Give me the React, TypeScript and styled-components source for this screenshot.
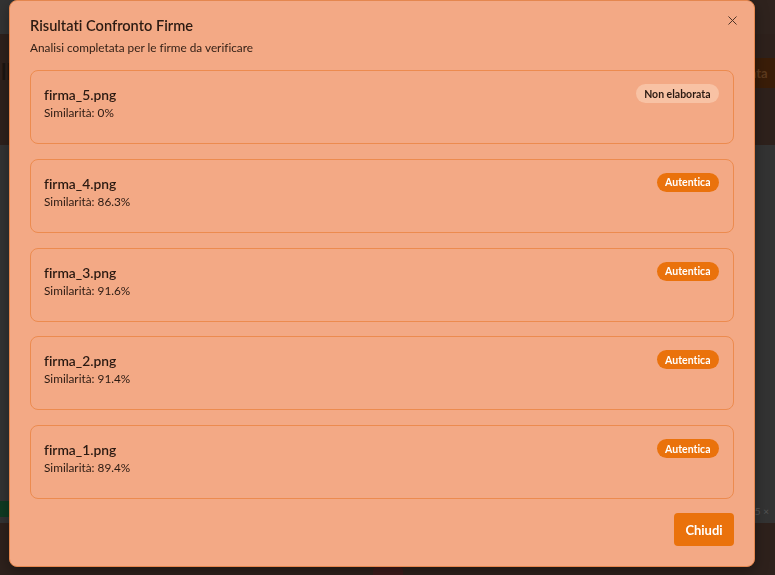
import React from "react";
import styled, { createGlobalStyle } from "styled-components";
import { X } from "lucide-react";

const GlobalStyle = createGlobalStyle`
  html, body { margin: 0; padding: 0; }
  body {
    background: #323232;
    font-family: Lato, "Noto Sans", Arial, sans-serif;
    font-variant-ligatures: none;
    overflow: hidden;
  }
  * { box-sizing: border-box; }
`;

const Page = styled.div`
  width: 775px;
  height: 575px;
  display: flex;
  flex-direction: column;
  background: #333333;
`;

const TopStrip = styled.div`
  height: 34px;
  background: linear-gradient(to right, #333333 0 700px, #2f231e 700px);
`;

const AppHeader = styled.div`
  height: 111px;
  background: #2e211c;
  display: flex;
  align-items: flex-start;
  justify-content: space-between;
  padding: 24px 0 0 0;
`;

const HeaderTitle = styled.div`
  font-size: 22px;
  font-weight: 700;
  color: #1b1511;
  padding-left: 1px;
`;

const HeaderButton = styled.div`
  width: 80px;
  height: 30px;
  background: #3a1d08;
  color: #5d3a1e;
  font-weight: 700;
  font-size: 13px;
  display: flex;
  align-items: center;
  padding-left: 14px;
  overflow: hidden;
`;

const MainArea = styled.div`
  flex: 1;
  display: flex;
  flex-direction: column;
  justify-content: flex-end;
`;

const StatusRow = styled.div`
  display: flex;
  justify-content: space-between;
  align-items: flex-end;
  padding: 0 0 6px 0;
`;

const GreenTag = styled.div`
  width: 9px;
  height: 16px;
  background: #0f3b22;
`;

const SmallNote = styled.div`
  font-size: 10px;
  color: #555;
  padding-right: 6px;
`;

const FooterBand = styled.div`
  height: 52px;
  background: #2e211c;
  display: flex;
  justify-content: center;
  align-items: flex-end;
`;

const RedMark = styled.div`
  width: 30px;
  height: 10px;
  background: #3d1b1b;
  border-radius: 6px 6px 0 0;
`;

const Modal = styled.div`
  position: fixed;
  left: 9px;
  top: 0;
  width: 746px;
  height: 567px;
  background: #f3a985;
  border: 1px solid #e4874f;
  border-radius: 8px;
  padding: 15px 20px 20px 20px;
  display: flex;
  flex-direction: column;
  color: #2b1a12;
  box-shadow: 0 4px 14px rgba(0, 0, 0, 0.35);
`;

const CloseButton = styled.button`
  position: absolute;
  right: 14px;
  top: 11px;
  width: 16px;
  height: 16px;
  padding: 0;
  border: none;
  background: transparent;
  color: #4e3427;
  display: flex;
  align-items: center;
  justify-content: center;
  cursor: pointer;
`;

const Title = styled.h2`
  margin: 0;
  font-size: 14.6px;
  line-height: 20px;
  font-weight: 600;
  color: #2b1a12;
`;

const Subtitle = styled.p`
  margin: 4px 0 0 0;
  font-size: 11.8px;
  line-height: 16px;
  color: #2f1d14;
`;

const CardList = styled.div`
  margin-top: 14px;
  display: flex;
  flex-direction: column;
  gap: 14.75px;
`;

const Card = styled.div`
  height: 74px;
  border: 1px solid #ec8b4f;
  border-radius: 8px;
  padding: 14px 14px 0 13px;
  display: flex;
  justify-content: space-between;
  align-items: flex-start;
`;

const CardInfo = styled.div`
  display: flex;
  flex-direction: column;
`;

const FileName = styled.div`
  font-size: 13.8px;
  line-height: 20px;
  font-weight: 600;
  color: #2b1a12;
`;

const Similarity = styled.div`
  font-size: 11.8px;
  line-height: 16px;
  color: #2b1a12;
`;

const Badge = styled.span<{ $variant: "ok" | "pending" }>`
  height: 19px;
  padding: 0 8.5px;
  border-radius: 999px;
  display: inline-flex;
  align-items: center;
  font-size: 10.5px;
  font-weight: 700;
  background: ${(p) => (p.$variant === "ok" ? "#ea720c" : "#f8c2a4")};
  color: ${(p) => (p.$variant === "ok" ? "#ffffff" : "#2b1a12")};
  margin-top: -1px;
`;

const Footer = styled.div`
  margin-top: auto;
  display: flex;
  justify-content: flex-end;
`;

const PrimaryButton = styled.button`
  width: 60px;
  height: 33px;
  border: none;
  border-radius: 4px;
  background: #ea720c;
  color: #ffffff;
  font-family: inherit;
  font-size: 13px;
  font-weight: 700;
  cursor: pointer;
`;

type Result = { name: string; similarity: string; status: "ok" | "pending" };

const results: Result[] = [
  { name: "firma_5.png", similarity: "0%", status: "pending" },
  { name: "firma_4.png", similarity: "86.3%", status: "ok" },
  { name: "firma_3.png", similarity: "91.6%", status: "ok" },
  { name: "firma_2.png", similarity: "91.4%", status: "ok" },
  { name: "firma_1.png", similarity: "89.4%", status: "ok" },
];

export default function App() {
  return (
    <>
      <GlobalStyle />
      <Page>
        <TopStrip />
        <AppHeader>
          <HeaderTitle>ll</HeaderTitle>
          <HeaderButton>Confronta</HeaderButton>
        </AppHeader>
        <MainArea>
          <StatusRow>
            <GreenTag />
            <SmallNote>5 ×</SmallNote>
          </StatusRow>
          <FooterBand>
            <RedMark />
          </FooterBand>
        </MainArea>
      </Page>
      <Modal role="dialog">
        <CloseButton aria-label="Chiudi">
          <X size={15} strokeWidth={1.6} />
        </CloseButton>
        <Title>Risultati Confronto Firme</Title>
        <Subtitle>Analisi completata per le firme da verificare</Subtitle>
        <CardList>
          {results.map((r) => (
            <Card key={r.name}>
              <CardInfo>
                <FileName>{r.name}</FileName>
                <Similarity>Similarità: {r.similarity}</Similarity>
              </CardInfo>
              <Badge $variant={r.status}>
                {r.status === "ok" ? "Autentica" : "Non elaborata"}
              </Badge>
            </Card>
          ))}
        </CardList>
        <Footer>
          <PrimaryButton>Chiudi</PrimaryButton>
        </Footer>
      </Modal>
    </>
  );
}
